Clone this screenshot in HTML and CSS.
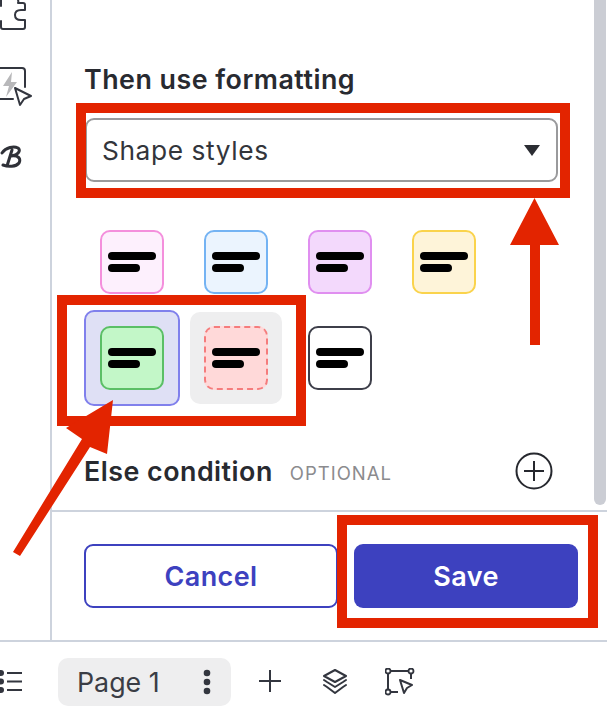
FILE: index.html
```html
<!DOCTYPE html>
<html lang="en">
<head>
<meta charset="utf-8">
<title>Then use formatting</title>
<link rel="stylesheet" href="styles.css">
</head>
<body>
<div class="app">
  <div class="main">
    <aside class="rail">
      <svg class="rail-icon puzzle" width="28" height="32" viewBox="0 0 28 32"><path d="M1 0V6M1 21V27Q1 29 3 29H23Q25 29 25 27V20H21Q15 20 15 15Q15 10 21 10H25V5Q25 3 23 3H18Q19 1 17-2" fill="none" stroke="#33363f" stroke-width="2" stroke-linecap="round" stroke-linejoin="round"/></svg>
      <svg class="rail-icon spark" width="34" height="40" viewBox="0 0 34 40"><path d="M-3 1H22Q25 1 25 4V20M13 32H-3" fill="none" stroke="#33363f" stroke-width="2" stroke-linecap="round"/><path d="M12 5L3 19H9L6 30L17 15H11Z" fill="#b8b8ba"/><path d="M15 21L31 29L24 32L20 38Z" fill="#fff" stroke="#33363f" stroke-width="2" stroke-linejoin="round"/></svg>
      <svg class="rail-icon script" width="24" height="24" viewBox="0 0 24 24"><path d="M2 8C6 2 14 1 18 3C21 5 19 10 11 11C19 10 21 14 19 18C16 22 8 22 3 20M12 5L7 21" fill="none" stroke="#2f3138" stroke-width="3" stroke-linecap="round" stroke-linejoin="round"/></svg>
    </aside>
    <section class="panel">
      <div class="panel-body">
        <h2 class="heading">Then use formatting</h2>
        <div class="select">
          <span>Shape styles</span>
          <span class="caret"></span>
        </div>
        <div class="swatches">
          <div class="cell"><div class="swatch pink"><i class="long"></i><i class="short"></i></div></div>
          <div class="cell"><div class="swatch blue"><i class="long"></i><i class="short"></i></div></div>
          <div class="cell"><div class="swatch purple"><i class="long"></i><i class="short"></i></div></div>
          <div class="cell"><div class="swatch yellow"><i class="long"></i><i class="short"></i></div></div>
          <div class="cell selected"><div class="swatch green"><i class="long"></i><i class="short"></i></div></div>
          <div class="cell hovered"><div class="swatch red"><i class="long"></i><i class="short"></i></div></div>
          <div class="cell"><div class="swatch plain"><i class="long"></i><i class="short"></i></div></div>
        </div>
        <div class="else-row">
          <h2 class="heading">Else condition</h2>
          <span class="optional">OPTIONAL</span>
          <svg class="add" width="38" height="38" viewBox="0 0 38 38"><circle cx="19" cy="19" r="17.5" fill="none" stroke="#26282e" stroke-width="2"/><path d="M9 19H29M19 9V29" stroke="#26282e" stroke-width="2"/></svg>
        </div>
      </div>
      <footer class="panel-foot">
        <button class="btn cancel">Cancel</button>
        <button class="btn save">Save</button>
      </footer>
    </section>
  </div>
  <nav class="bar">
    <svg class="list" width="24" height="22" viewBox="0 0 24 22"><path d="M7 3H22M7 11.500H22M7 20H22" stroke="#33363f" stroke-width="2"/><circle cx="1" cy="3" r="3" fill="#33363f"/><circle cx="1" cy="11.500" r="3" fill="#33363f"/><circle cx="1" cy="20" r="3" fill="#33363f"/></svg>
    <div class="page-pill">
      <span>Page 1</span>
      <svg width="8" height="26" viewBox="0 0 8 26"><circle cx="4" cy="4" r="3.300" fill="#33363f"/><circle cx="4" cy="13" r="3.300" fill="#33363f"/><circle cx="4" cy="22" r="3.300" fill="#33363f"/></svg>
    </div>
    <svg class="plus" width="22" height="22" viewBox="0 0 22 22"><path d="M0 11H22M11 0V22" stroke="#33363f" stroke-width="2"/></svg>
    <svg class="layers" width="26" height="26" viewBox="0 0 26 26"><path d="M13 1L24 7L13 13L2 7Z" fill="none" stroke="#33363f" stroke-width="2" stroke-linejoin="round"/><path d="M2 11L5 13L13 18L21 13L24 11M2 16L5 18L13 24L21 18L24 16" fill="none" stroke="#33363f" stroke-width="2" stroke-linejoin="round" stroke-linecap="round"/></svg>
    <svg class="select-tool" width="30" height="28" viewBox="0 0 30 28"><path d="M5 3H25M3 5V22M6 24H13M26 5V11" stroke="#33363f" stroke-width="2"/><circle cx="3" cy="3" r="2.500" fill="#fff" stroke="#33363f" stroke-width="1.800"/><circle cx="26" cy="3" r="2.500" fill="#fff" stroke="#33363f" stroke-width="1.800"/><circle cx="3" cy="24" r="2.500" fill="#fff" stroke="#33363f" stroke-width="1.800"/><path d="M15 12L27 17L22 20L19 25Z" fill="#fff" stroke="#33363f" stroke-width="2" stroke-linejoin="round"/></svg>
  </nav>
  <div class="scrollbar"></div>
  <div class="callout callout-select"></div>
  <div class="callout callout-swatches"></div>
  <div class="callout callout-save"></div>
  <svg class="arrows" width="607" height="713" viewBox="0 0 607 713"><path d="M534.500 198L559 245H540V345H530V245H510Z" fill="#e32400"/><path d="M113 400L107 454L90 447L20 556L13 552L82 439L66 428Z" fill="#e32400"/></svg>
</div>
</body>
</html>
```

FILE: styles.css
```css
* { box-sizing: border-box; }
html, body { margin: 0; padding: 0; height: 100%; overflow: hidden; background: #fff; }
body { font-family: Inter, "Liberation Sans", sans-serif; color: #2b2d33; }

.app { position: relative; width: 607px; height: 713px; display: flex; flex-direction: column; overflow: hidden; }
.main { display: flex; height: 642px; border-bottom: 2px solid #cdd3dd; }

.rail { width: 52px; flex: none; border-right: 2px solid #cdd3dd; display: flex; flex-direction: column; overflow: hidden; }
.rail-icon { display: block; flex: none; overflow: visible; }
.spark { margin-top: 35px; }
.script { margin-top: 38px; }

.panel { flex: 1; display: flex; flex-direction: column; min-width: 0; }
.panel-body { height: 512px; padding: 64px 0 0 32px; border-bottom: 2px solid #cdd3dd; }
.heading { margin: 0; font-size: 26.800px; line-height: 30px; font-weight: 600; letter-spacing: 0.500px; color: #282a30; }

.select { width: 473px; height: 64px; margin: 24px 0 0 1px; padding: 0 16px 0 15px; border: 2px solid #9a9a9c; border-radius: 9px; display: flex; align-items: center; justify-content: space-between; font-size: 26.300px; letter-spacing: 0.600px; color: #33353b; }
.caret { width: 0; height: 0; border-left: 8px solid transparent; border-right: 8px solid transparent; border-top: 11px solid #2b2d33; }

.swatches { display: grid; grid-template-columns: repeat(4, 96px); grid-auto-rows: 96px; column-gap: 8px; margin: 32px 0 0 0; }
.cell { display: flex; align-items: center; justify-content: center; border-radius: 10px; }
.selected { background: #dfe0f5; border: 2px solid #8080ec; }
.hovered { background: #eeeeef; margin: 2px; }

.swatch { width: 64px; height: 64px; border: 2px solid; border-radius: 10px; display: flex; flex-direction: column; justify-content: center; gap: 4px; padding-left: 6px; flex: none; }
.swatch i { display: block; height: 8px; border-radius: 4px; background: #000; }
.long { width: 48px; }
.short { width: 32px; }
.pink { border-color: #f48fdc; background: #fdf0fd; }
.blue { border-color: #74b3f3; background: #ebf4fe; }
.purple { border-color: #e08ff0; background: #f3d9fc; }
.yellow { border-color: #fad34c; background: #fef4d9; }
.green { border-color: #5bbf66; background: #c3f7c8; }
.red { border-color: #f57c7c; border-style: dashed; background: #ffd9d9; }
.plain { border-color: #3e3f4a; background: #fff; }

.else-row { display: flex; align-items: center; margin-top: 46px; height: 38px; padding-right: 54px; }
.optional { margin-left: 17px; font-size: 18.500px; letter-spacing: 1px; color: #8b8b8e; padding-top: 3px; }
.add { margin-left: auto; }

.panel-foot { flex: 1; display: flex; gap: 16px; padding: 32px 0 0 32px; }
.btn { height: 64px; border-radius: 9px; font-family: inherit; font-size: 27px; font-weight: 600; letter-spacing: 0.400px; padding: 0; }
.cancel { width: 254px; background: #fff; border: 2px solid #3d41bf; color: #3d41bf; }
.save { width: 224px; background: #3d41bf; border: 0; color: #fff; }

.bar { flex: 1; display: flex; align-items: flex-start; padding-top: 16px; }
.list { margin-top: 12px; flex: none; overflow: visible; }
.page-pill { margin-left: 34px; width: 173px; height: 48px; border-radius: 10px; background: #eeeeef; display: flex; align-items: center; justify-content: space-between; padding: 0 20px 0 19px; font-size: 26.800px; color: #3a3d45; }
.plus { margin: 12px 0 0 28px; flex: none; }
.layers { margin: 11px 0 0 41px; flex: none; }
.select-tool { margin: 10px 0 0 37px; flex: none; }

.scrollbar { position: absolute; left: 594px; top: 0; width: 12px; height: 505px; background: #cbcdd4; border-radius: 0 0 6px 6px; }
.callout { position: absolute; border: 10px solid #e32400; }
.callout-select { left: 76px; top: 103px; width: 494px; height: 95px; }
.callout-swatches { left: 57px; top: 295px; width: 249px; height: 131px; }
.callout-save { left: 337px; top: 515px; width: 261px; height: 113px; }
.arrows { position: absolute; left: 0; top: 0; pointer-events: none; }
```
